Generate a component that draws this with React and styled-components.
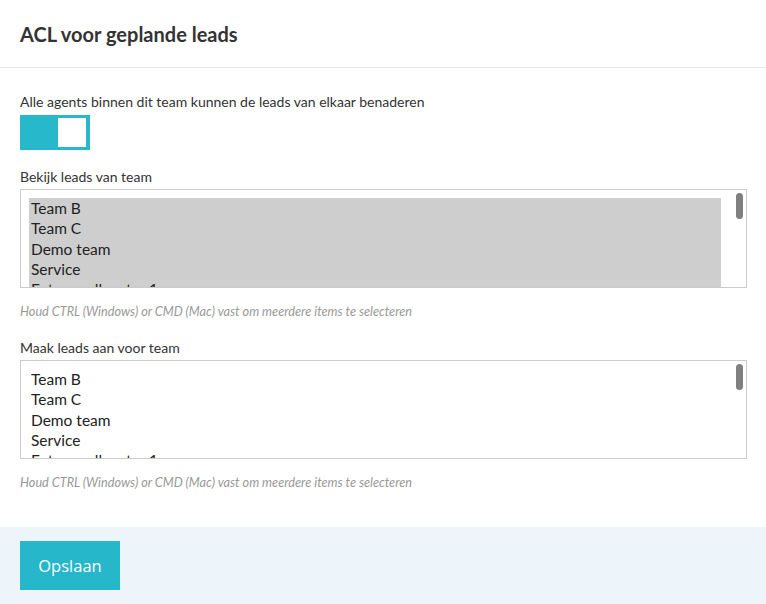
import React from 'react'
import styled, { createGlobalStyle } from 'styled-components'

const GlobalStyle = createGlobalStyle`
  html, body {
    margin: 0;
    padding: 0;
    background: #fff;
  }
  body {
    font-family: Lato, "Open Sans", sans-serif;
    color: #333;
  }
`

const teams = ['Team B', 'Team C', 'Demo team', 'Service', 'Extern callcenter 1', 'Extern callcenter 2']

function TeamList({ selected }) {
    return (
        <ListBox>
            <Options>
                {teams.map((t) => (
                    <Option key={t} selected={selected}>{t}</Option>
                ))}
            </Options>
            <Thumb />
        </ListBox>
    )
}

function App() {
    return (
        <Page>
            <GlobalStyle />
            <Header>
                <h3>ACL voor geplande leads</h3>
            </Header>
            <Body>
                <Label>Alle agents binnen dit team kunnen de leads van elkaar benaderen</Label>
                <Toggle>
                    <Knob />
                </Toggle>

                <Label $top={17}>Bekijk leads van team</Label>
                <TeamList selected />
                <Help>Houd CTRL (Windows) or CMD (Mac) vast om meerdere items te selecteren</Help>

                <Label $top={19}>Maak leads aan voor team</Label>
                <TeamList />
                <Help>Houd CTRL (Windows) or CMD (Mac) vast om meerdere items te selecteren</Help>
            </Body>
            <Footer>
                <SaveButton>Opslaan</SaveButton>
            </Footer>
        </Page>
    )
}

export default App

const Page = styled.div`
  width: 766px;
  height: 604px;
  display: flex;
  flex-direction: column;
  overflow: hidden;
`

const Header = styled.div`
  height: 68px;
  display: flex;
  align-items: center;
  padding: 0 20px;
  border-bottom: 1px solid #e8e8e8;
  h3 {
    margin: 0;
    font-size: 20px;
    font-weight: 700;
    color: #333;
  }
`

const Body = styled.div`
  flex: 1;
  padding: 24px 19px 0 20px;
  display: flex;
  flex-direction: column;
`

const Label = styled.div`
  font-size: 14px;
  line-height: 20px;
  color: #333;
  margin-top: ${(p) => p.$top || 0}px;
  margin-bottom: 2px;
`

const Toggle = styled.div`
  width: 70px;
  height: 35px;
  box-sizing: border-box;
  margin-top: 1px;
  background: #27b8cc;
  padding: 3px 4px 3px 3px;
  display: flex;
  justify-content: flex-end;
`

const Knob = styled.div`
  width: 28px;
  height: 29px;
  background: #fff;
`

const ListBox = styled.div`
  position: relative;
  height: 99px;
  box-sizing: border-box;
  border: 1px solid #cbcbcb;
  padding: 8px 25px 0 8px;
  overflow: hidden;
  background: #fff;
`

const Options = styled.div`
  display: flex;
  flex-direction: column;
`

const Option = styled.div`
  font-size: 15.5px;
  line-height: 20.3px;
  padding-left: 2px;
  color: #222;
  background: ${(p) => (p.selected ? '#cecece' : 'transparent')};
  white-space: nowrap;
`

const Thumb = styled.div`
  position: absolute;
  top: 3px;
  right: 3px;
  width: 7px;
  height: 26px;
  border-radius: 4px;
  background: #808080;
`

const Help = styled.div`
  font-size: 12.7px;
  line-height: 16px;
  font-style: italic;
  color: #999;
  margin-top: 15px;
`

const Footer = styled.div`
  margin-top: 37px;
  background: #edf5fb;
  padding: 14px 20px;
  flex: 1;
`

const SaveButton = styled.button`
  width: 100px;
  height: 49px;
  border: none;
  background: #27b7cb;
  color: #fff;
  font-family: "Open Sans", sans-serif;
  font-size: 16.5px;
  cursor: pointer;
`
